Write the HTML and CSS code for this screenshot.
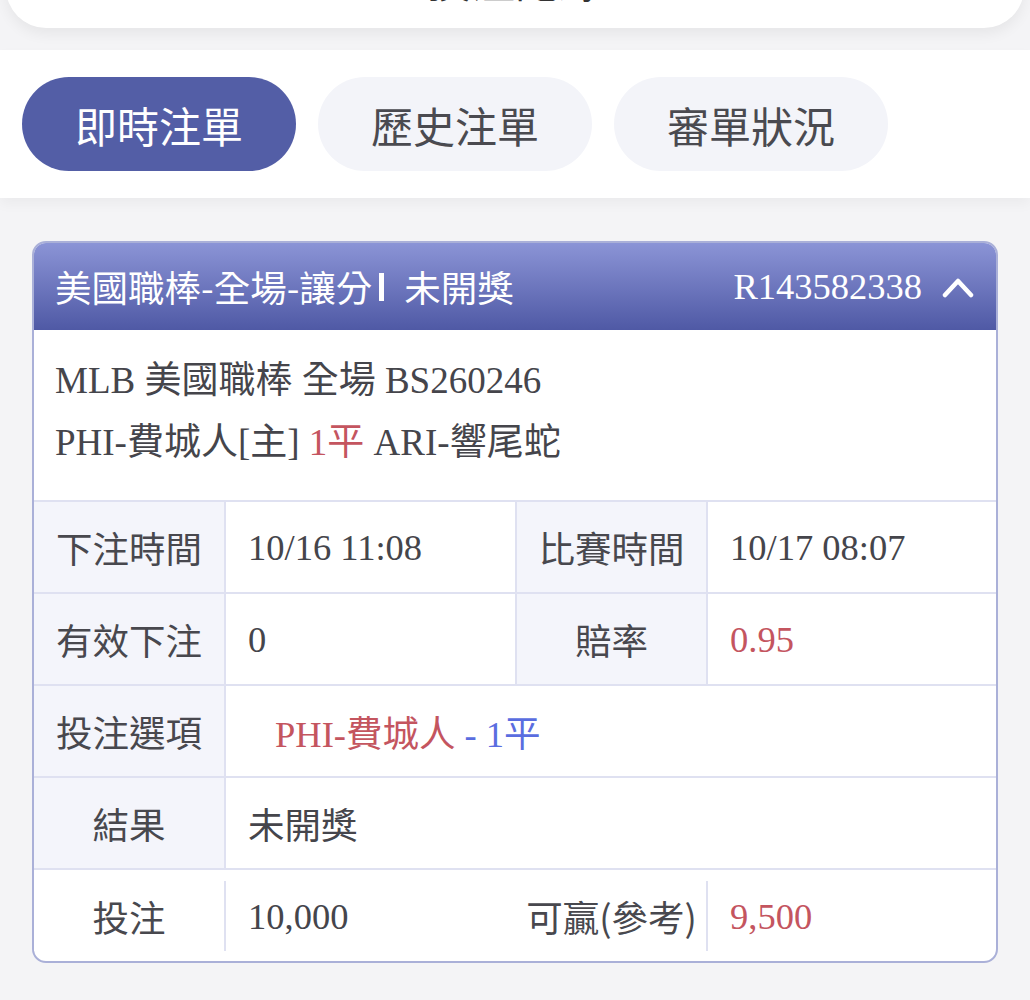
FILE: index.html
```html
<!DOCTYPE html>
<html lang="zh-Hant">
<head>
  <meta charset="UTF-8" />
  <meta name="viewport" content="width=device-width, initial-scale=1.0"/>
  <title>即時注單</title>
  <link rel="stylesheet" href="styles.css">
</head>
<body>
  <div class="top-bar"><span class="top-title">投注記錄</span></div>

  <div class="tabs">
    <button type="button" class="tab active">即時注單</button>
    <button type="button" class="tab">歷史注單</button>
    <button type="button" class="tab">審單狀況</button>
  </div>

  <div class="ticket">
    <div class="ticket-head">
      <div class="head-title">美國職棒-全場-讓分<span class="bar"></span>未開獎</div>
      <div class="head-no">
        R143582338
        <svg class="chevron" width="32" height="22" viewBox="0 0 32 22">
          <polyline points="3,19 16,5 29,19" fill="none" stroke="#fff" stroke-width="4.5" stroke-linecap="round" stroke-linejoin="round"/>
        </svg>
      </div>
    </div>

    <div class="match">
      <div>MLB 美國職棒 全場 BS260246</div>
      <div>PHI-費城人[主] <span class="red">1平</span> ARI-響尾蛇</div>
    </div>

    <div class="grid">
      <div class="label">下注時間</div>
      <div class="value">10/16 11:08</div>
      <div class="label">比賽時間</div>
      <div class="value last">10/17 08:07</div>

      <div class="label">有效下注</div>
      <div class="value">0</div>
      <div class="label">賠率</div>
      <div class="value last red">0.95</div>

      <div class="label">投注選項</div>
      <div class="value wide pick"><span><span class="red">PHI-費城人</span><span class="blue"> - 1平</span></span></div>

      <div class="label">結果</div>
      <div class="value wide">未開獎</div>
    </div>

    <div class="grid foot">
      <div class="label">投注</div>
      <div class="value open">10,000</div>
      <div class="label">可贏(參考)</div>
      <div class="value last red">9,500</div>
    </div>
  </div>
</body>
</html>
```

FILE: styles.css
```css
* { margin: 0; padding: 0; box-sizing: border-box; }
body {
  font-family: "Liberation Serif", "Noto Sans CJK TC", serif;
  background-color: #f4f4f6;
  color: #45454b;
  min-height: 100vh;
}
.top-bar {
  height: 90px;
  margin: -62px 6px 0;
  background-color: #fff;
  border-radius: 0 0 40px 40px;
  box-shadow: 0 6px 14px rgba(0,0,0,0.06);
  display: flex;
  align-items: flex-end;
  justify-content: center;
  padding-bottom: 22px;
}
.top-title { font-size: 44px; line-height: 44px; color: #333; }

.tabs {
  margin-top: 22px;
  background-color: #fff;
  padding: 27px 22px;
  display: flex;
  gap: 22px;
  box-shadow: 0 6px 12px rgba(0,0,0,0.04);
}
.tab {
  width: 274px;
  height: 94px;
  border: none;
  border-radius: 47px;
  background-color: #f3f4f9;
  color: #4a4a50;
  font-family: "Noto Sans CJK TC", sans-serif;
  font-size: 42px;
}
.tab.active { background-color: #535ea6; color: #fff; }

.ticket {
  margin: 43px 32px 0;
  background-color: #fff;
  border: 2px solid #aab0d8;
  border-radius: 14px;
  overflow: hidden;
}
.ticket-head {
  height: 87px;
  padding: 0 22px 0 21px;
  display: flex;
  align-items: center;
  justify-content: space-between;
  background: linear-gradient(#8b94d6, #4f59a5);
  color: #fff;
  font-size: 36.5px;
}
.head-title { font-family: "Noto Sans CJK TC", sans-serif; display: flex; align-items: center; }
.bar {
  width: 5px;
  height: 28px;
  margin: 0 20px 0 7px;
  background-color: #fff;
}
.head-no { display: flex; align-items: center; gap: 20px; }

.match {
  padding: 20px 21px 26px;
  font-size: 37px;
  line-height: 62px;
}
.red { color: #c4555f; }
.blue { color: #5a6de0; }

.grid {
  display: grid;
  grid-template-columns: 192px 291px 191px 1fr;
  font-size: 36.5px;
}
.grid > div {
  height: 92px;
  border-top: 2px solid #dfe1f1;
  border-right: 2px solid #dfe1f1;
  display: flex;
  align-items: center;
}
.grid .label {
  justify-content: center;
  background-color: #f4f5fb;
  color: #48484e;
  font-family: "Noto Sans CJK TC", sans-serif;
}
.grid .value { padding-left: 22px; }
.grid .last { border-right: none; }
.grid .wide { grid-column: span 3; border-right: none; }
.grid .pick { padding-left: 49px; white-space: pre; }

.grid.foot { border-top: 2px solid #dfe1f1; padding: 11px 0 10px; }
.grid.foot > div { height: 70px; border-top: none; }
.grid.foot .label { background-color: #fff; }
.grid.foot .open,
.grid.foot .last { border-right: none; }
```
